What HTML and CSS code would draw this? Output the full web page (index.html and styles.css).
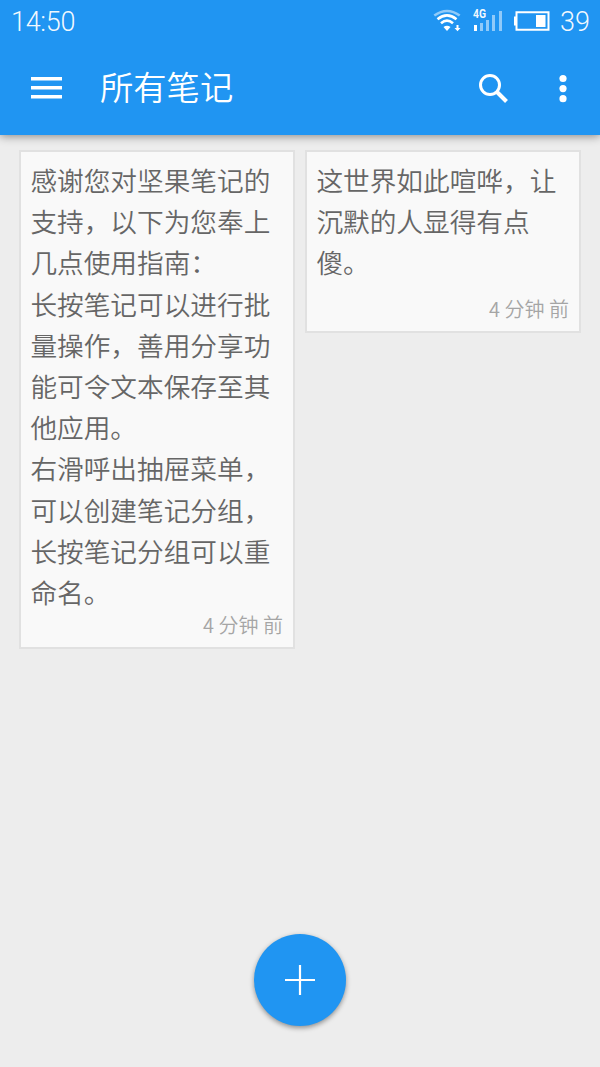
FILE: index.html
```html
<!DOCTYPE html>
<html lang="zh-CN">
<head>
<meta charset="utf-8">
<title>所有笔记</title>
<link rel="stylesheet" href="styles.css">
</head>
<body>
<div class="screen">
  <header class="header">
    <div class="status">
      <span class="clock">14:50</span>
      <svg class="status-icons" width="132" height="32" viewBox="0 0 132 32" fill="none">
        <g stroke="#fff" stroke-width="2.6">
          <path d="M4.300 15.500Q17 6.500 29.700 15.500" opacity=".5"/>
          <path d="M7.500 19.200Q17 11.500 26.500 19.200"/>
          <path d="M11 23.300Q17 18 23 23.300"/>
        </g>
        <path d="M13.500 27Q17 24.500 20.500 27L17 31Z" fill="#fff"/>
        <path d="M26.500 25h2v3h2l-3 3.200-3-3.200h2z" fill="#fff"/>
        <path d="M44 25h3v6h-3z" fill="#fff"/>
        <path d="M50 23h3v8h-3zM56 20h3v11h-3zM62 15h3v16h-3zM69 11h3v20h-3z" fill="#fff" opacity=".5"/>
        <path d="M86.500 12.300h32v17.400h-32z" stroke="#fff" stroke-width="2"/>
        <path d="M84 16.500h2.500v9H84zM106 15h9.500v12H106z" fill="#fff"/>
      </svg>
      <span class="network">4G</span>
      <span class="battery">39</span>
    </div>
    <div class="toolbar">
      <svg class="menu" width="32" height="24" viewBox="0 0 32 24"><path d="M0 1h31v3.500H0zM0 10h31v3.500H0zM0 19h31v3.500H0z" fill="#fff"/></svg>
      <h1 class="title">所有笔记</h1>
      <svg class="search" width="32" height="32" viewBox="0 0 32 32" fill="none" stroke="#fff"><circle cx="12" cy="12" r="9.500" stroke-width="3"/><path d="M19 19l9.500 9.500" stroke-width="4"/></svg>
      <svg class="more" width="8" height="30" viewBox="0 0 8 30" fill="#fff"><circle cx="4" cy="4.500" r="3.600"/><circle cx="4" cy="14.600" r="3.600"/><circle cx="4" cy="24.700" r="3.600"/></svg>
    </div>
  </header>
  <main class="notes">
    <article class="note note-long">
      <p class="text">感谢您对坚果笔记的<br>支持，以下为您奉上<br>几点使用指南：<br>长按笔记可以进行批<br>量操作，善用分享功<br>能可令文本保存至其<br>他应用。<br>右滑呼出抽屉菜单，<br>可以创建笔记分组，<br>长按笔记分组可以重<br>命名。</p>
      <time class="time">4 分钟 前</time>
    </article>
    <article class="note note-short">
      <p class="text">这世界如此喧哗，让<br>沉默的人显得有点<br>傻。</p>
      <time class="time">4 分钟 前</time>
    </article>
  </main>
  <button class="add" aria-label="新建笔记"><svg width="30" height="30" viewBox="0 0 30 30"><path d="M13.900 0h2.200v13.900H30v2.200H16.100V30h-2.200V16.100H0v-2.200h13.900z" fill="#fff"/></svg></button>
</div>
</body>
</html>
```
FILE: styles.css
```css
* { box-sizing: border-box; }
body { margin: 0; }
.screen {
  position: relative;
  width: 600px;
  height: 1067px;
  overflow: hidden;
  background: #ededed;
  font-family: "Noto Sans CJK SC DemiLight", "Noto Sans CJK SC", sans-serif;
  font-weight: 350;
}
.header {
  height: 135px;
  background: #2095f2;
  color: #fff;
  box-shadow: 0 1px 9px rgba(0, 0, 0, .45);
}
.status {
  position: relative;
  display: flex;
  height: 42px;
  padding: 0 10px 0 11px;
  font: 300 27px/45px Roboto, sans-serif;
  color: rgba(255, 255, 255, .94);
}
.clock { width: 419px; letter-spacing: -.3px; }
.status-icons { flex: none; }
.battery { margin-left: -2px; }
.network {
  position: absolute;
  left: 473px;
  top: 8px;
  font: 700 13px/12px "Roboto", sans-serif;
  transform: scaleX(.8);
  transform-origin: left;
}
.toolbar {
  display: flex;
  align-items: center;
  height: 92px;
  padding: 0 33px 0 31px;
}
.menu { flex: none; }
.title {
  flex: 1;
  margin: -4px 0 0 37px;
  font-size: 33.3px;
  line-height: 48px;
  font-weight: 350;
}
.search { flex: none; margin: 1px 49px 0 0; }
.more { flex: none; margin-top: 1px; }
.notes {
  display: flex;
  align-items: flex-start;
  gap: 10px;
  padding: 15px 18px 0 19px;
}
.note {
  display: flex;
  flex-direction: column;
  flex: none;
  width: 276px;
  padding: 7px 10px 8px 9.400px;
  border: 2px solid #e1e1e1;
  background: #f9f9f9;
}
.note-long { height: 499px; }
.note-short { height: 183px; }
.text {
  margin: 0 -5px 0 0;
  font-size: 26.67px;
  line-height: 41.2px;
  color: #666;
  white-space: nowrap;
}
.time {
  margin-top: auto;
  text-align: right;
  font-size: 20px;
  line-height: 28px;
  color: #a5a5a5;
}
.note-long .time { margin-top: -1px; }
.add {
  position: absolute;
  left: 254px;
  top: 934px;
  display: flex;
  align-items: center;
  justify-content: center;
  width: 92px;
  height: 92px;
  padding: 0;
  border: 0;
  border-radius: 50%;
  background: #2095f2;
  box-shadow: 0 2px 5px rgba(0, 0, 0, .4);
}
```
